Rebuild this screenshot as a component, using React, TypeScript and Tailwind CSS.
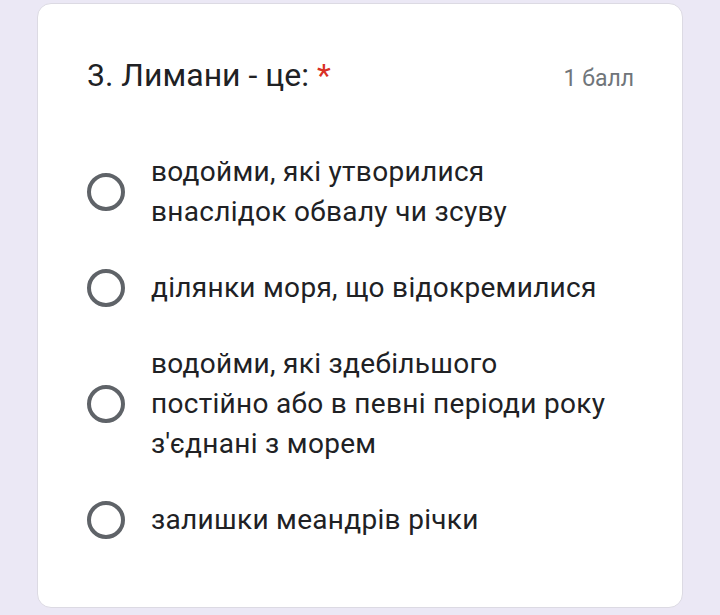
const options = [
  ['водойми, які утворилися', 'внаслідок обвалу чи зсуву'],
  ['ділянки моря, що відокремилися'],
  ['водойми, які здебільшого', 'постійно або в певні періоди року', "з'єднані з морем"],
  ['залишки меандрів річки'],
];

function Radio() {
  return <div className="w-[38px] h-[38px] shrink-0 rounded-full border-[4px] border-[#5f6368]" />;
}

export default function App() {
  return (
    <div className="w-[720px] h-[615px] bg-[#ebe8f5] pt-[3px] pl-[37px] pr-[37px] font-['Roboto',sans-serif]">
      <div className="h-[605px] bg-white rounded-[14px] border border-[#dcdae3] pl-[49px] pr-[48px] pt-[50px]">
        {/* Question header */}
        <div className="flex items-baseline justify-between">
          <div className="text-[32px] leading-[42px] text-[#202124]">
            3. Лимани - це: <span className="text-[#d93025]">*</span>
          </div>
          <div className="text-[23px] text-[#70757a]">1 балл</div>
        </div>

        {/* Options */}
        <div className="mt-[55px] flex flex-col gap-[36px]">
          {options.map((lines, i) => (
            <div key={i} className="flex items-center gap-[26px]">
              <Radio />
              <div className="text-[28px] leading-[40px] text-[#202124] tracking-[0.3px]">
                {lines.map((l, j) => (
                  <div key={j}>{l}</div>
                ))}
              </div>
            </div>
          ))}
        </div>
      </div>
    </div>
  );
}
